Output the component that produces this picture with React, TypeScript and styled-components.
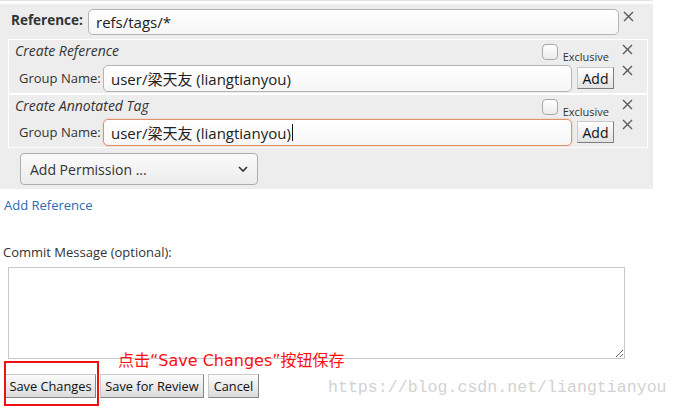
import React from 'react'
import styled, { createGlobalStyle } from 'styled-components'

const GlobalStyle = createGlobalStyle`
  html, body {
    margin: 0;
    padding: 0;
    background: #ffffff;
  }
  body {
    font-family: 'Open Sans', 'Noto Sans CJK SC', sans-serif;
    color: #333333;
  }
`

const StyledPage = styled.div`
  position: relative;
  width: 679px;
  height: 408px;
  overflow: hidden;
`

const StyledTopRule = styled.div`
  width: 653px;
  height: 1px;
  background: #e2e2e2;
  margin-bottom: 3px;
`

const StyledRefPanel = styled.div`
  width: 653px;
  background: #ededed;
  padding: 5px 0 4px 0;
  box-sizing: border-box;
  display: flex;
  flex-direction: column;
`

const StyledRefRow = styled.div`
  display: flex;
  align-items: flex-start;
  height: 26px;
  margin-bottom: 4px;
`

const StyledRefLabel = styled.span`
  margin: 0 6px 0 11px;
  width: 71px;
  line-height: 22px;
  font-size: 13.5px;
  font-weight: 700;
  color: #333;
`

const StyledField = styled.div<{ $width: number; $height: number; $focused?: boolean }>`
  box-sizing: border-box;
  width: ${(p) => p.$width}px;
  height: ${(p) => p.$height}px;
  padding: 0 7px;
  display: flex;
  align-items: center;
  border: 1px solid ${(p) => (p.$focused ? '#e3906c' : '#b4b4b4')};
  border-radius: 5px;
  background: linear-gradient(#ffffff, #f6f6f6);
  box-shadow: ${(p) => (p.$focused ? '0 0 2px rgba(230, 140, 100, 0.5)' : 'none')};
  font-family: 'Open Sans', 'Noto Sans CJK SC', sans-serif;
  font-size: 15px;
  color: #222;
  white-space: nowrap;
`

const StyledCaret = styled.span`
  display: inline-block;
  width: 1px;
  height: 17px;
  margin-left: 1px;
  background: #111;
`

const StyledCloseButton = styled.span<{ $top: number; $left?: number }>`
  display: inline-flex;
  margin-top: ${(p) => p.$top}px;
  margin-left: ${(p) => p.$left ?? 0}px;
  width: 11px;
  height: 11px;
  color: #5a5a5a;
`

const StyledPermBox = styled.div`
  margin-left: 8px;
  width: 640px;
  box-sizing: border-box;
  border: 1px solid #ffffff;
  padding-bottom: 1px;
  display: flex;
  flex-direction: column;
`

const StyledPermHeader = styled.div<{ $height: number }>`
  display: flex;
  align-items: flex-start;
  height: ${(p) => p.$height}px;
`

const StyledPermTitle = styled.span`
  flex: 1;
  padding-left: 6px;
  font-size: 14px;
  font-style: italic;
  line-height: 22px;
  color: #333;
`

const StyledCheckbox = styled.span`
  box-sizing: border-box;
  width: 16px;
  height: 16px;
  margin-top: 4px;
  border: 1px solid #a8a8a8;
  border-radius: 4px;
  background: linear-gradient(#ffffff, #ececec);
`

const StyledExclusive = styled.span`
  margin: 10px 13px 0 5px;
  font-size: 11px;
  line-height: 14px;
  color: #333;
`

const StyledHeaderSpacer = styled.span`
  width: 14px;
`

const StyledPermBody = styled.div`
  display: flex;
  align-items: center;
  height: 28px;
`

const StyledGroupLabel = styled.span`
  width: 84px;
  padding-left: 10px;
  font-size: 13px;
  color: #333;
`

const StyledAddButton = styled.button`
  box-sizing: border-box;
  width: 37px;
  height: 22px;
  margin: 0 8px 0 5px;
  padding: 0;
  border: 1px solid #c9c9c9;
  border-right-color: #7e7e7e;
  border-bottom-color: #7e7e7e;
  border-radius: 0;
  background: linear-gradient(#ffffff, #e2e2e2);
  font-family: 'Open Sans', sans-serif;
  font-size: 14px;
  color: #111;
`

const StyledBodyClose = styled.span`
  align-self: flex-start;
  display: inline-flex;
  margin-top: 1px;
  width: 11px;
  height: 11px;
  color: #5a5a5a;
`

const StyledSelect = styled.div`
  box-sizing: border-box;
  margin: 5px 0 0 20px;
  width: 238px;
  height: 32px;
  padding: 0 9px 0 9px;
  display: flex;
  align-items: center;
  justify-content: space-between;
  border: 1px solid #aeaeae;
  border-radius: 4px;
  background: linear-gradient(#fbfbfb, #ececec);
  font-size: 14px;
  color: #333;
`

const StyledAddLink = styled.a`
  display: block;
  margin: 7px 0 0 4px;
  line-height: 18px;
  font-size: 13px;
  color: #2b6cb5;
  text-decoration: none;
`

const StyledCommitLabel = styled.div`
  margin: 29px 0 0 3px;
  line-height: 18px;
  font-size: 13px;
  color: #333;
`

const StyledCommitArea = styled.textarea`
  display: block;
  box-sizing: border-box;
  margin: 6px 0 0 8px;
  width: 617px;
  height: 92px;
  border: 1px solid #c8c8c8;
  border-radius: 0;
  padding: 2px;
  background: #fff;
  outline: none;
`

const StyledButtonRow = styled.div`
  display: flex;
  gap: 4px;
  margin: 15px 0 0 5px;
`

const StyledFormButton = styled.button<{ $width: number }>`
  box-sizing: border-box;
  width: ${(p) => p.$width}px;
  height: 24px;
  padding: 0;
  border: 1px solid #cacaca;
  border-right-color: #858585;
  border-bottom-color: #858585;
  border-radius: 0;
  background: linear-gradient(#fbfbfb, #dcdcdc);
  font-family: 'Open Sans', sans-serif;
  font-size: 12.8px;
  color: #111;
  white-space: nowrap;
`

const StyledHighlight = styled.div`
  position: absolute;
  left: 4px;
  top: 361px;
  width: 95px;
  height: 45px;
  box-sizing: border-box;
  border: 2px solid #ee1111;
  pointer-events: none;
`

const StyledAnnotation = styled.div`
  position: absolute;
  left: 118px;
  top: 350px;
  font-family: 'DejaVu Sans', 'Noto Sans CJK SC', sans-serif;
  font-size: 16px;
  line-height: 22px;
  color: #ff1010;
  white-space: nowrap;
`

const StyledWatermark = styled.div`
  position: absolute;
  left: 328px;
  top: 378px;
  font-family: 'Liberation Mono', monospace;
  font-size: 16.6px;
  line-height: 20px;
  color: #d2d2d2;
  white-space: nowrap;
`

const CloseGlyph = () => (
  <svg width="11" height="11" viewBox="0 0 11 11">
    <path d="M1 1 L10 10 M10 1 L1 10" stroke="currentColor" strokeWidth="1.4" fill="none" />
  </svg>
)

const Chevron = () => (
  <svg width="10" height="6" viewBox="0 0 10 6">
    <path d="M1 1 L5 5 L9 1" stroke="#333" strokeWidth="1.6" fill="none" />
  </svg>
)

const FORM_BUTTONS = [
  { label: 'Save Changes', width: 91 },
  { label: 'Save for Review', width: 104 },
  { label: 'Cancel', width: 51 },
]

type PermissionType = {
  title: string
  headerHeight: number
  focused?: boolean
}

const Permission: React.FC<PermissionType> = ({ title, headerHeight, focused }) => (
  <StyledPermBox>
    <StyledPermHeader $height={headerHeight}>
      <StyledPermTitle>{title}</StyledPermTitle>
      <StyledCheckbox />
      <StyledExclusive>Exclusive</StyledExclusive>
      <StyledCloseButton $top={4}>
        <CloseGlyph />
      </StyledCloseButton>
      <StyledHeaderSpacer />
    </StyledPermHeader>
    <StyledPermBody>
      <StyledGroupLabel>Group Name:</StyledGroupLabel>
      <StyledField $width={469} $height={27} $focused={focused}>
        user/梁天友 (liangtianyou)
        {focused && <StyledCaret />}
      </StyledField>
      <StyledAddButton>Add</StyledAddButton>
      <StyledBodyClose>
        <CloseGlyph />
      </StyledBodyClose>
    </StyledPermBody>
  </StyledPermBox>
)

const App: React.FC = () => {
  return (
    <StyledPage>
      <GlobalStyle />
      <StyledTopRule />
      <StyledRefPanel>
        <StyledRefRow>
          <StyledRefLabel>Reference:</StyledRefLabel>
          <StyledField $width={531} $height={26}>
            refs/tags/*
          </StyledField>
          <StyledCloseButton $top={2} $left={4}>
            <CloseGlyph />
          </StyledCloseButton>
        </StyledRefRow>
        <Permission title="Create Reference" headerHeight={24} />
        <Permission title="Create Annotated Tag" headerHeight={23} focused />
        <StyledSelect>
          <span>Add Permission ...</span>
          <Chevron />
        </StyledSelect>
      </StyledRefPanel>
      <StyledAddLink href="#">Add Reference</StyledAddLink>
      <StyledCommitLabel>Commit Message (optional):</StyledCommitLabel>
      <StyledCommitArea />
      <StyledButtonRow>
        {FORM_BUTTONS.map(({ label, width }) => (
          <StyledFormButton key={label} $width={width}>
            {label}
          </StyledFormButton>
        ))}
      </StyledButtonRow>
      <StyledHighlight />
      <StyledAnnotation>点击“Save Changes”按钮保存</StyledAnnotation>
      <StyledWatermark>https://blog.csdn.net/liangtianyou</StyledWatermark>
    </StyledPage>
  )
}

export default App
